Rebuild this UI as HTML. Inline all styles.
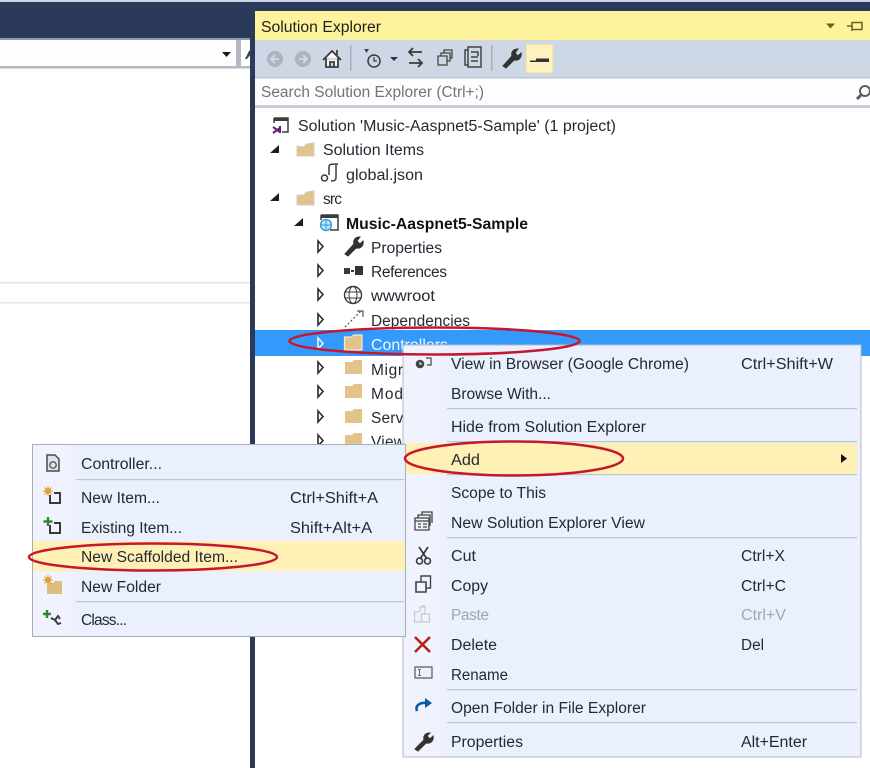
<!DOCTYPE html>
<html><head><meta charset="utf-8"><title>Solution Explorer</title>
<style>
html,body{margin:0;padding:0;width:870px;height:768px;overflow:hidden;background:#fff}
svg{display:block;filter:blur(.3px)}
text{font-family:"Liberation Sans",sans-serif;font-size:15.5px;fill:#222a33}
.d{fill:#a3a7ae}.s{fill:#717478}.w{fill:#f3f8ff}.b{font-weight:bold;fill:#111}
</style></head><body>
<svg width="870" height="768" viewBox="0 0 870 768" xmlns="http://www.w3.org/2000/svg">
<!-- left pane -->
<rect width="870" height="2" fill="#cdd3e2"/>
<rect y="2" width="870" height="9" fill="#2a3a58"/>
<rect y="11" width="255" height="27" fill="#2a3a58"/>
<rect y="38" width="250" height="2" fill="#8e9ab2"/>
<rect y="40" width="236" height="26" fill="#fdfdfd"/>
<rect y="66" width="250" height="2.500" fill="#b3b8c2"/>
<rect x="236" y="40" width="5" height="26" fill="#b3b8c2"/>
<path d="M222 52h9l-4.500 5z" fill="#1c1c1c"/>
<path d="M245 59l4-8 2-1v4l-4 5z" fill="#444"/>
<rect y="282" width="250" height="1.500" fill="#e6e6e6"/><rect y="302" width="250" height="1.500" fill="#e6e6e6"/>
<rect x="250" y="11" width="5" height="757" fill="#2a3a58"/>
<!-- title bar -->
<rect x="255" y="11" width="615" height="29" fill="#fff29d"/>
<text x="261" y="32" textLength="120" lengthAdjust="spacingAndGlyphs" style="fill:#1f1f1f">Solution Explorer</text>
<path d="M826 23.500h9l-4.500 5z" fill="#6f5f25"/>
<path d="M847 26h5M852 27h1M852 22.500h10v7h-10zM852 22v9" fill="none" stroke="#6f5f25" stroke-width="1.500"/>
<!-- toolbar -->
<rect x="255" y="40" width="615" height="37" fill="#ced7e6"/>
<circle cx="275" cy="59" r="8" fill="#aeb3bc"/><path d="M279 59h-7M275 55l-4 4 4 4" fill="none" stroke="#ced7e6" stroke-width="2"/>
<circle cx="303" cy="59" r="8" fill="#aeb3bc"/><path d="M299 59h7M303 55l4 4-4 4" fill="none" stroke="#ced7e6" stroke-width="2"/>
<path d="M323 60l9-9 9 9M326 58v9h12v-9M330 67v-5h4v5M337 50v5" fill="#f5f5f5" stroke="#3c3c3c" stroke-width="1.800"/>
<rect x="350" y="45" width="1.500" height="26" fill="#a8b0c0"/>
<path d="M364 49h5l-2.500 4z" fill="#444"/><circle cx="374" cy="61" r="6" fill="none" stroke="#3a3a3a" stroke-width="1.500"/><path d="M374 57v4h3" fill="none" stroke="#3a3a3a" stroke-width="1.200"/>
<path d="M390 57h8l-4 4z" fill="#333"/>
<path d="M422 52h-13M413 48l-4 4 4 4M409 63h13M418 59l4 4-4 4" fill="none" stroke="#3a3a3a" stroke-width="1.800"/>
<path d="M438 56h9v9h-9zM441 56v-3h9v8h-3M444 53v-3h8v8h-2" fill="none" stroke="#444" stroke-width="1.300"/>
<path d="M468 50h-3v15h3M468 47h13v20h-13zM471 52h7v4M471 57h7M471 61h7" fill="none" stroke="#444" stroke-width="1.500"/>
<rect x="491" y="45" width="1.500" height="26" fill="#a8b0c0"/>
<path d="M503 66l9-10c-1-4 1-7 6-7l-3 4 3 3 3-3c1 4-2 8-7 7l-8 8z" fill="#333" stroke="#333"/>
<rect x="526" y="44" width="27" height="29" rx="1" fill="#fff2bd" stroke="#e6d9a5"/>
<path d="M530 60.500h6v-2h13v3.500h-19z" fill="#33333a"/>
<!-- search -->
<rect x="255" y="77" width="615" height="1.500" fill="#bcc3d3"/>
<rect x="255" y="78.500" width="615" height="26.500" fill="#fdfdfd"/>
<rect x="255" y="105" width="615" height="3" fill="#c7cddb"/>
<text class="s" x="261" y="97" textLength="223" lengthAdjust="spacingAndGlyphs">Search Solution Explorer (Ctrl+;)</text>
<circle cx="865" cy="91" r="5" fill="none" stroke="#5c5c5c" stroke-width="2"/><path d="M861 95l-4 4" stroke="#5c5c5c" stroke-width="3"/>
<!-- tree -->
<rect x="255" y="330" width="615" height="26" fill="#3399fb"/>
<path d="M274 118h14v14h-6M274 118v5" fill="none" stroke="#3d3d3d" stroke-width="1.500"/><rect x="274" y="118" width="14" height="3" fill="#3d3d3d"/>
<path d="M273 127l7 5M273 133l7-5M280 126v7" fill="none" stroke="#68217a" stroke-width="2"/>
<text x="298" y="131" textLength="318" lengthAdjust="spacingAndGlyphs">Solution 'Music-Aaspnet5-Sample' (1 project)</text>
<path d="M270 153l9-8v8z" fill="#1f1f1f"/>
<path d="M297 146l0 10h17v-13l-8 1-2 3z" fill="#dfc28c" stroke="#d4cfc4"/>
<text x="323" y="155" textLength="101" lengthAdjust="spacingAndGlyphs">Solution Items</text>
<path d="M329 175v-8c0-3 2-3 9-3M336 165v13c0 2-2 3-5 3" fill="none" stroke="#3a3a3a" stroke-width="1.500"/><circle cx="324.500" cy="178" r="3" fill="none" stroke="#3a3a3a" stroke-width="1.500"/>
<text x="346" y="180" textLength="77" lengthAdjust="spacingAndGlyphs">global.json</text>
<path d="M270 201l9-8v8z" fill="#1f1f1f"/>
<path d="M297 195l0 10h17v-14l-8 1-2 3z" fill="#dfc28c" stroke="#d4cfc4"/>
<text x="323" y="204" textLength="19" lengthAdjust="spacing">src</text>
<path d="M294 226l9-8v8z" fill="#1f1f1f"/>
<path d="M321 215h17v15h-8M321 215v5" fill="none" stroke="#3d3d3d" stroke-width="1.500"/><rect x="321" y="215" width="17" height="3" fill="#3d3d3d"/>
<circle cx="326" cy="225" r="5.500" fill="#bfe3f7" stroke="#2c9bd6" stroke-width="1.300"/><path d="M320.500 225h11M326 219.500v11" stroke="#2c9bd6"/>
<text class="b" x="346" y="229" textLength="182" lengthAdjust="spacingAndGlyphs">Music-Aaspnet5-Sample</text>
<g fill="#fff" stroke="#2b2b2b" stroke-width="1.600">
<path d="M318 241l5 5.500-5 5.500z"/><path d="M318 265l5 5.500-5 5.500z"/><path d="M318 289l5 5.500-5 5.500z"/><path d="M318 314l5 5.500-5 5.500z"/><path d="M318 362l5 5.500-5 5.500z"/><path d="M318 386l5 5.500-5 5.500z"/><path d="M318 411l5 5.500-5 5.500z"/><path d="M318 435l5 5.500-5 5.500z"/>
</g>
<path d="M318 338l5 5.500-5 5.500z" fill="#3399fb" stroke="#e8f3ff" stroke-width="1.600"/>
<path d="M345 254l9-10c-1-4 1-7 6-7l-3 4 3 3 3-3c1 4-2 8-7 7l-8 8z" fill="#333" stroke="#333"/>
<text x="371" y="253" textLength="71" lengthAdjust="spacingAndGlyphs">Properties</text>
<rect x="344" y="268" width="6" height="6" fill="#3a3a3a"/><rect x="351" y="270" width="3" height="2" fill="#3a3a3a"/><rect x="355" y="266" width="8" height="9" fill="#333"/>
<text x="371" y="277" textLength="76" lengthAdjust="spacing">References</text>
<circle cx="353" cy="295" r="8.500" fill="none" stroke="#3a3a3a" stroke-width="1.400"/><ellipse cx="353" cy="295" rx="4" ry="8.500" fill="none" stroke="#3a3a3a"/><path d="M345 292h16M345 298h16" stroke="#3a3a3a"/>
<text x="371" y="301" textLength="64" lengthAdjust="spacingAndGlyphs">wwwroot</text>
<path d="M345 327l17-17" stroke="#555" stroke-dasharray="2 2" stroke-width="1.200"/><path d="M357 311h6v6" fill="none" stroke="#333"/>
<text x="371" y="326" textLength="99" lengthAdjust="spacingAndGlyphs">Dependencies</text>
<path d="M344.500 337h7l2-2h8.500v15h-17.500z" fill="#e3c38a" stroke="#f6ebd6" stroke-width="1.200"/>
<text class="w" x="371" y="350" textLength="77" lengthAdjust="spacingAndGlyphs">Controllers</text>
<path d="M345 362h7l2-2h8v14h-17z" fill="#e3c38a"/>
<text x="371" y="375" textLength="32" lengthAdjust="spacing">Migr</text>
<path d="M345 386h7l2-2h8v14h-17z" fill="#e3c38a"/>
<text x="371" y="399" textLength="32" lengthAdjust="spacing">Mod</text>
<path d="M345 411h7l2-2h8v14h-17z" fill="#e3c38a"/>
<text x="371" y="423" textLength="36" lengthAdjust="spacing">Servi</text>
<path d="M345 435h7l2-2h8v14h-17z" fill="#e3c38a"/>
<text x="371" y="447" textLength="34" lengthAdjust="spacing">View</text>
<!-- right menu -->
<rect x="403" y="345" width="458" height="412" fill="#eaf0fd" stroke="#b5bac4" stroke-width="1"/>
<rect x="404" y="346" width="36" height="410" fill="#f0f3fe"/>
<rect x="404" y="443" width="453" height="31" fill="#fff0b5"/>
<g fill="#bfc5d1">
<rect x="447" y="408" width="410" height="1.200"/><rect x="447" y="441" width="410" height="1.200"/><rect x="447" y="474" width="410" height="1.200"/><rect x="447" y="537" width="410" height="1.200"/><rect x="447" y="689" width="410" height="1.200"/><rect x="447" y="722" width="410" height="1.200"/>
</g>
<circle cx="420" cy="364" r="3.800" fill="#444" stroke="#444"/><path d="M420 362v2h2" stroke="#fff" fill="none"/><path d="M426 358h5v7h-4" fill="none" stroke="#444" stroke-width="1.200"/>
<text x="451" y="369" textLength="238" lengthAdjust="spacingAndGlyphs">View in Browser (Google Chrome)</text>
<text x="741" y="369" textLength="92" lengthAdjust="spacingAndGlyphs">Ctrl+Shift+W</text>
<text x="451" y="399" textLength="100" lengthAdjust="spacingAndGlyphs">Browse With...</text>
<text x="451" y="432" textLength="195" lengthAdjust="spacingAndGlyphs">Hide from Solution Explorer</text>
<text x="451" y="465" textLength="29" lengthAdjust="spacingAndGlyphs">Add</text>
<path d="M841 454l6 4.500-6 4.500z" fill="#111"/>
<text x="451" y="498" textLength="95" lengthAdjust="spacingAndGlyphs">Scope to This</text>
<path d="M415 518h14v12h-14zM418 518v-3h12v11M422 515v-3h10v11M415 521h14M418 524h3M423 524h4M418 527h3M423 527h4" fill="none" stroke="#444" stroke-width="1.300"/>
<text x="451" y="528" textLength="194" lengthAdjust="spacingAndGlyphs">New Solution Explorer View</text>
<path d="M419 547l8 12M428 547l-8 12" stroke="#333" stroke-width="1.600"/><circle cx="419.500" cy="561" r="3" fill="none" stroke="#333" stroke-width="1.500"/><circle cx="427.500" cy="561" r="3" fill="none" stroke="#333" stroke-width="1.500"/>
<text x="451" y="561" textLength="25" lengthAdjust="spacingAndGlyphs">Cut</text>
<text x="741" y="561" textLength="44" lengthAdjust="spacingAndGlyphs">Ctrl+X</text>
<path d="M416 582h10v10h-10z" fill="none" stroke="#444" stroke-width="1.600"/><path d="M421 582v-6h9.500v12h-4" fill="none" stroke="#444" stroke-width="1.400"/>
<text x="451" y="591" textLength="37" lengthAdjust="spacingAndGlyphs">Copy</text>
<text x="741" y="591" textLength="45" lengthAdjust="spacingAndGlyphs">Ctrl+C</text>
<path d="M419 612h-4.500v10h7v-8h8v8h-8M420 612v-5h5v7M421 606h4" fill="none" stroke="#c7cbd3" stroke-width="1.300"/>
<text class="d" x="451" y="620" textLength="38" lengthAdjust="spacing">Paste</text>
<text class="d" x="741" y="620" textLength="45" lengthAdjust="spacingAndGlyphs">Ctrl+V</text>
<path d="M415 637l15 15M430 637l-15 15" stroke="#b02418" stroke-width="2.600"/>
<text x="451" y="650" textLength="46" lengthAdjust="spacingAndGlyphs">Delete</text>
<text x="741" y="650" textLength="23" lengthAdjust="spacingAndGlyphs">Del</text>
<rect x="415" y="667" width="17" height="11" fill="#eef1f8" stroke="#555" stroke-width="1.200"/><path d="M418 669.500h3M418 675.500h3M419.500 670v5" stroke="#444" stroke-width=".8"/>
<text x="451" y="680" textLength="57" lengthAdjust="spacingAndGlyphs">Rename</text>
<path d="M417 711c-2-5 2-9 11-8" fill="none" stroke="#0b5a9c" stroke-width="2.600"/><path d="M425 698l7 5-7 5z" fill="#0b5a9c"/>
<text x="451" y="713" textLength="195" lengthAdjust="spacingAndGlyphs">Open Folder in File Explorer</text>
<path d="M415 749l9-9c-1-4 1-7 6-7l-3 3 3 3 3-3c1 4-2 8-7 7l-8 8z" fill="#333" stroke="#333"/>
<text x="451" y="747" textLength="72" lengthAdjust="spacingAndGlyphs">Properties</text>
<text x="741" y="747" textLength="66" lengthAdjust="spacingAndGlyphs">Alt+Enter</text>
<!-- left menu -->
<rect x="32.500" y="444.500" width="373" height="192" fill="#eaf0fd" stroke="#a8aeb9" stroke-width="1"/>
<rect x="33" y="445" width="38" height="191" fill="#f0f3fe"/>
<rect x="33" y="541" width="372" height="30" fill="#fff0b5"/>
<rect x="76" y="479" width="328" height="1.200" fill="#bfc5d1"/><rect x="76" y="601" width="328" height="1.200" fill="#bfc5d1"/>
<path d="M47 455h8l4 4v12h-12z" fill="#dfe1e6" stroke="#4a4a4a" stroke-width="1.500"/><circle cx="53" cy="465" r="3.200" fill="none" stroke="#444" stroke-width="1.200"/>
<text x="81" y="469" textLength="81" lengthAdjust="spacingAndGlyphs">Controller...</text>
<circle cx="48" cy="491" r="3" fill="#e39b32"/><path d="M43 491h10M48 486v10M44.500 487.500l7 7M51.500 487.500l-7 7" stroke="#e39b32"/>
<path d="M50 495v8h10v-10h-6" fill="none" stroke="#3a3a3a" stroke-width="2"/>
<text x="81" y="503" textLength="79" lengthAdjust="spacingAndGlyphs">New Item...</text>
<text x="290" y="503" textLength="88" lengthAdjust="spacingAndGlyphs">Ctrl+Shift+A</text>
<path d="M48 517v9M43.500 521.500h9" stroke="#2d8a34" stroke-width="2.400"/>
<path d="M50 525v8h10v-10h-6" fill="none" stroke="#3a3a3a" stroke-width="2"/>
<text x="81" y="533" textLength="101" lengthAdjust="spacingAndGlyphs">Existing Item...</text>
<text x="290" y="533" textLength="82" lengthAdjust="spacingAndGlyphs">Shift+Alt+A</text>
<text x="81" y="562" textLength="157" lengthAdjust="spacingAndGlyphs">New Scaffolded Item...</text>
<path d="M47 583h6l2-2h7v13h-15z" fill="#dfbd80"/>
<circle cx="48" cy="580" r="3" fill="#e39b32"/><path d="M43 580h10M48 575v10M44.500 576.500l7 7M51.500 576.500l-7 7" stroke="#e39b32"/>
<text x="81" y="592" textLength="80" lengthAdjust="spacingAndGlyphs">New Folder</text>
<path d="M47 610v8M43 614h8" stroke="#2d8a34" stroke-width="2.400"/>
<path d="M51 618l4 2 3-4 2 3M55 620l3 4 3-1" fill="none" stroke="#3a3a3a" stroke-width="1.900"/>
<text x="81" y="625" textLength="46" lengthAdjust="spacing">Class...</text>
<!-- red ellipses -->
<g fill="none" stroke="#c5172e" stroke-width="2.500">
<ellipse cx="434.500" cy="341" rx="145" ry="13.500"/>
<ellipse cx="514" cy="458.500" rx="109" ry="17"/>
<ellipse cx="153" cy="557" rx="124" ry="13.500"/>
</g>
</svg>
</body></html>
